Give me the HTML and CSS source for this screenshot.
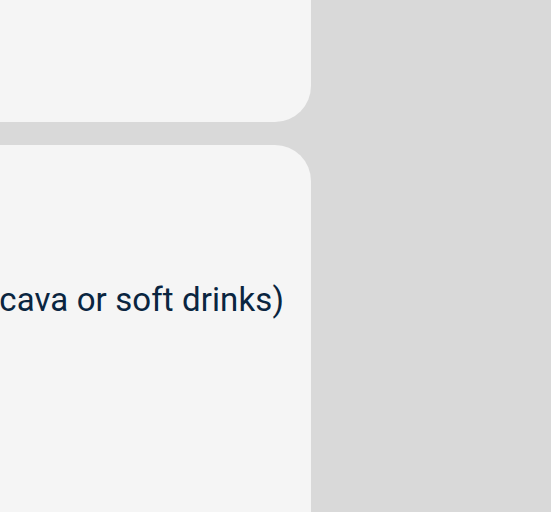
FILE: index.html
```html
<!DOCTYPE html>
<html lang="en">
<head>
    <meta charset="UTF-8">
    <meta name="viewport" content="width=device-width, initial-scale=1.0">
    <title>Menu</title>
    <link rel="stylesheet" href="styles.css">
</head>
<body>
    <div class="column">
        <div class="card card-top"></div>
        <div class="card card-bottom">
            <p class="item">cava or soft drinks)</p>
        </div>
    </div>
</body>
</html>
```

FILE: styles.css
```css
body {
    margin: 0;
    font-family: Roboto, 'Liberation Sans', sans-serif;
    background-color: #d9d9d9;
    overflow: hidden;
}
.column {
    width: 311px;
    height: 512px;
    display: flex;
    flex-direction: column;
    gap: 23px;
}
.card {
    background-color: #f5f5f5;
}
.card-top {
    height: 122px;
    border-bottom-right-radius: 36px;
}
.card-bottom {
    flex: 1;
    border-top-right-radius: 36px;
    padding-top: 134px;
    padding-right: 27px;
    display: flex;
    justify-content: flex-end;
    align-items: flex-start;
    overflow: hidden;
}
.item {
    margin: 0;
    white-space: nowrap;
    font-size: 33px;
    line-height: 42px;
    letter-spacing: 0.1px;
    color: #0a2540;
}
```
